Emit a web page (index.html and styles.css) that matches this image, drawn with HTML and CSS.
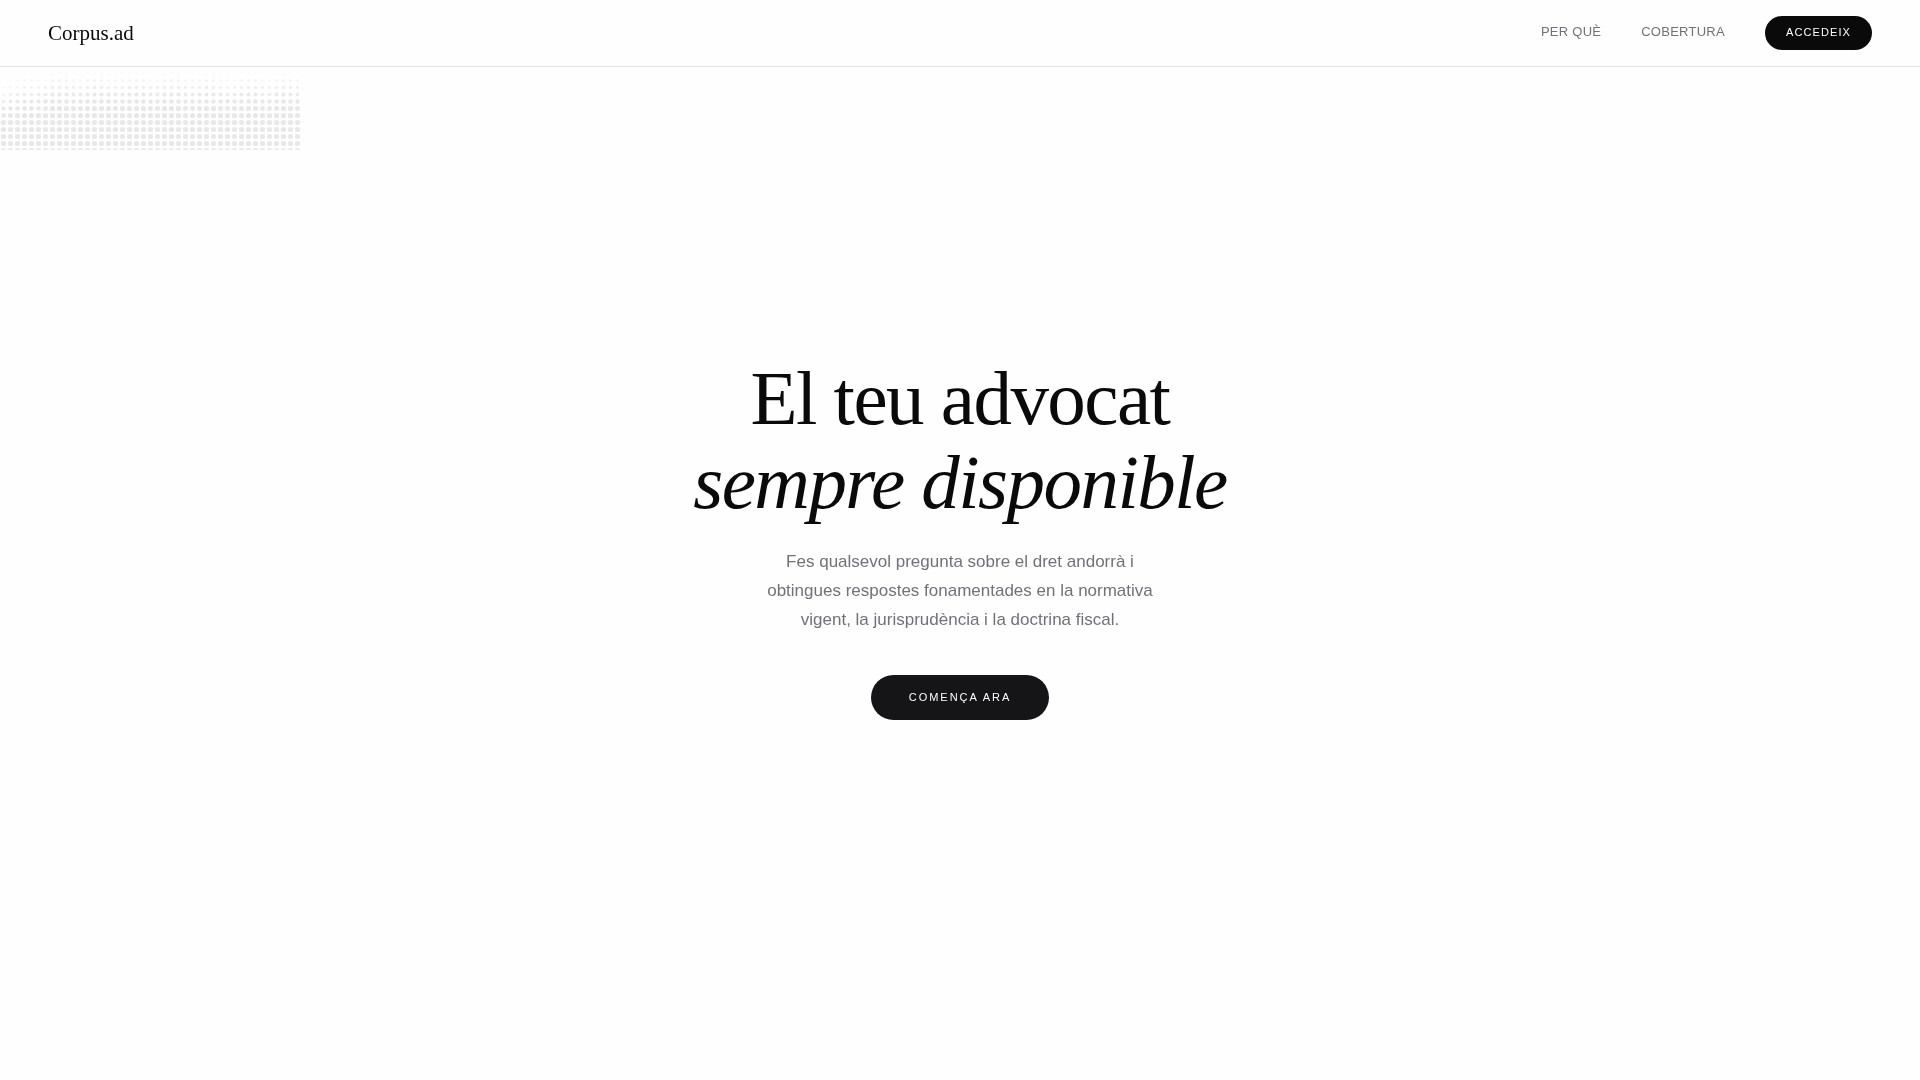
FILE: index.html
```
<!DOCTYPE html>
<html lang="ca">
<head>
  <meta charset="UTF-8">
  <meta name="viewport" content="width=device-width, initial-scale=1.0">
  <title>Corpus.ad</title>
  <link rel="stylesheet" href="styles.css">
</head>
<body>
  <canvas id="halftone" class="halftone" width="300" height="150" aria-hidden="true"></canvas>

  <header class="nav">
    <a class="logo" href="#">Corpus.ad</a>
    <nav class="nav-links">
      <a class="nav-link" href="#per-que">Per què</a>
      <a class="nav-link" href="#cobertura">Cobertura</a>
      <a class="nav-cta" href="#accedeix">Accedeix</a>
    </nav>
  </header>

  <main class="hero">
    <h1 class="hero-title">El teu advocat<br><em>sempre disponible</em></h1>
    <p class="hero-text">Fes qualsevol pregunta sobre el dret andorrà i obtingues respostes fonamentades en la normativa vigent, la jurisprudència i la doctrina fiscal.</p>
    <a class="hero-cta" href="#accedeix">Comença ara</a>
  </main>

  <script src="script.js"></script>
</body>
</html>
```
FILE: styles.css
```
* {
  box-sizing: border-box;
  margin: 0;
  padding: 0;
}
body {
  display: flex;
  flex-direction: column;
  min-height: 100vh;
  font-family: "Liberation Sans", Arial, sans-serif;
  background-color: #fefefe;
  color: #0a0a0b;
}
a {
  text-decoration: none;
}

/* Dot pattern behind the page */
.halftone {
  position: absolute;
  top: 0;
  left: 0;
  z-index: -1;
}

/* Navigation */
.nav {
  display: flex;
  justify-content: space-between;
  align-items: center;
  padding: 16px 48px;
  background-color: #fefefe;
  border-bottom: 1px solid #e4e4e7;
}
.logo {
  font-family: "Liberation Serif", "Times New Roman", serif;
  font-size: 21px;
  color: #0a0a0b;
}
.nav-links {
  display: flex;
  align-items: baseline;
  gap: 40px;
}
.nav-link {
  font-size: 13px;
  letter-spacing: 0.02em;
  text-transform: uppercase;
  color: #71717a;
}
.nav-cta {
  padding: 9px 21px 11px;
  border-radius: 100px;
  font-size: 11px;
  line-height: 14px;
  letter-spacing: 0.1em;
  text-transform: uppercase;
  background-color: #0a0a0b;
  color: #fefefe;
}

/* Hero */
.hero {
  flex: 1;
  display: flex;
  flex-direction: column;
  align-items: center;
  justify-content: center;
  padding-bottom: 72px;
  text-align: center;
}
.hero-title {
  margin-bottom: 23px;
  font-family: "Liberation Serif", "Times New Roman", serif;
  font-size: 77px;
  font-weight: 400;
  line-height: 84px;
  letter-spacing: -0.02em;
}
.hero-text {
  max-width: 420px;
  margin-bottom: 41px;
  font-size: 17px;
  line-height: 29px;
  color: #71717a;
}
.hero-cta {
  padding: 15px 38px;
  border-radius: 100px;
  font-size: 11px;
  line-height: 15px;
  letter-spacing: 0.18em;
  text-transform: uppercase;
  background-color: #151517;
  color: #fefefe;
}
```
FILE: script.js
```
const canvas = document.getElementById("halftone");
const ctx = canvas.getContext("2d");
const step = 7;
const maxRadius = 2.6;

// Dots grow towards the bottom, with a soft wave along the columns
function drawDots() {
  ctx.fillStyle = "#e8e8e9";
  for (let y = step / 2; y < canvas.height + step; y += step) {
    for (let x = step / 2; x < canvas.width; x += step) {
      const edge = Math.max(0, 1 - x / 50) * 9;
      const wave = 2 * Math.sin(x / 6 - 2) + Math.sin(x / 45 - 1);
      const level = Math.min(1, Math.max(0, (y - 70 + wave - edge) / 40));
      if (level === 0) continue;
      ctx.globalAlpha = Math.min(1, 0.3 + level);
      ctx.beginPath();
      ctx.arc(x, y, maxRadius * Math.pow(level, 0.6), 0, Math.PI * 2);
      ctx.fill();
    }
  }
}

drawDots();
```
